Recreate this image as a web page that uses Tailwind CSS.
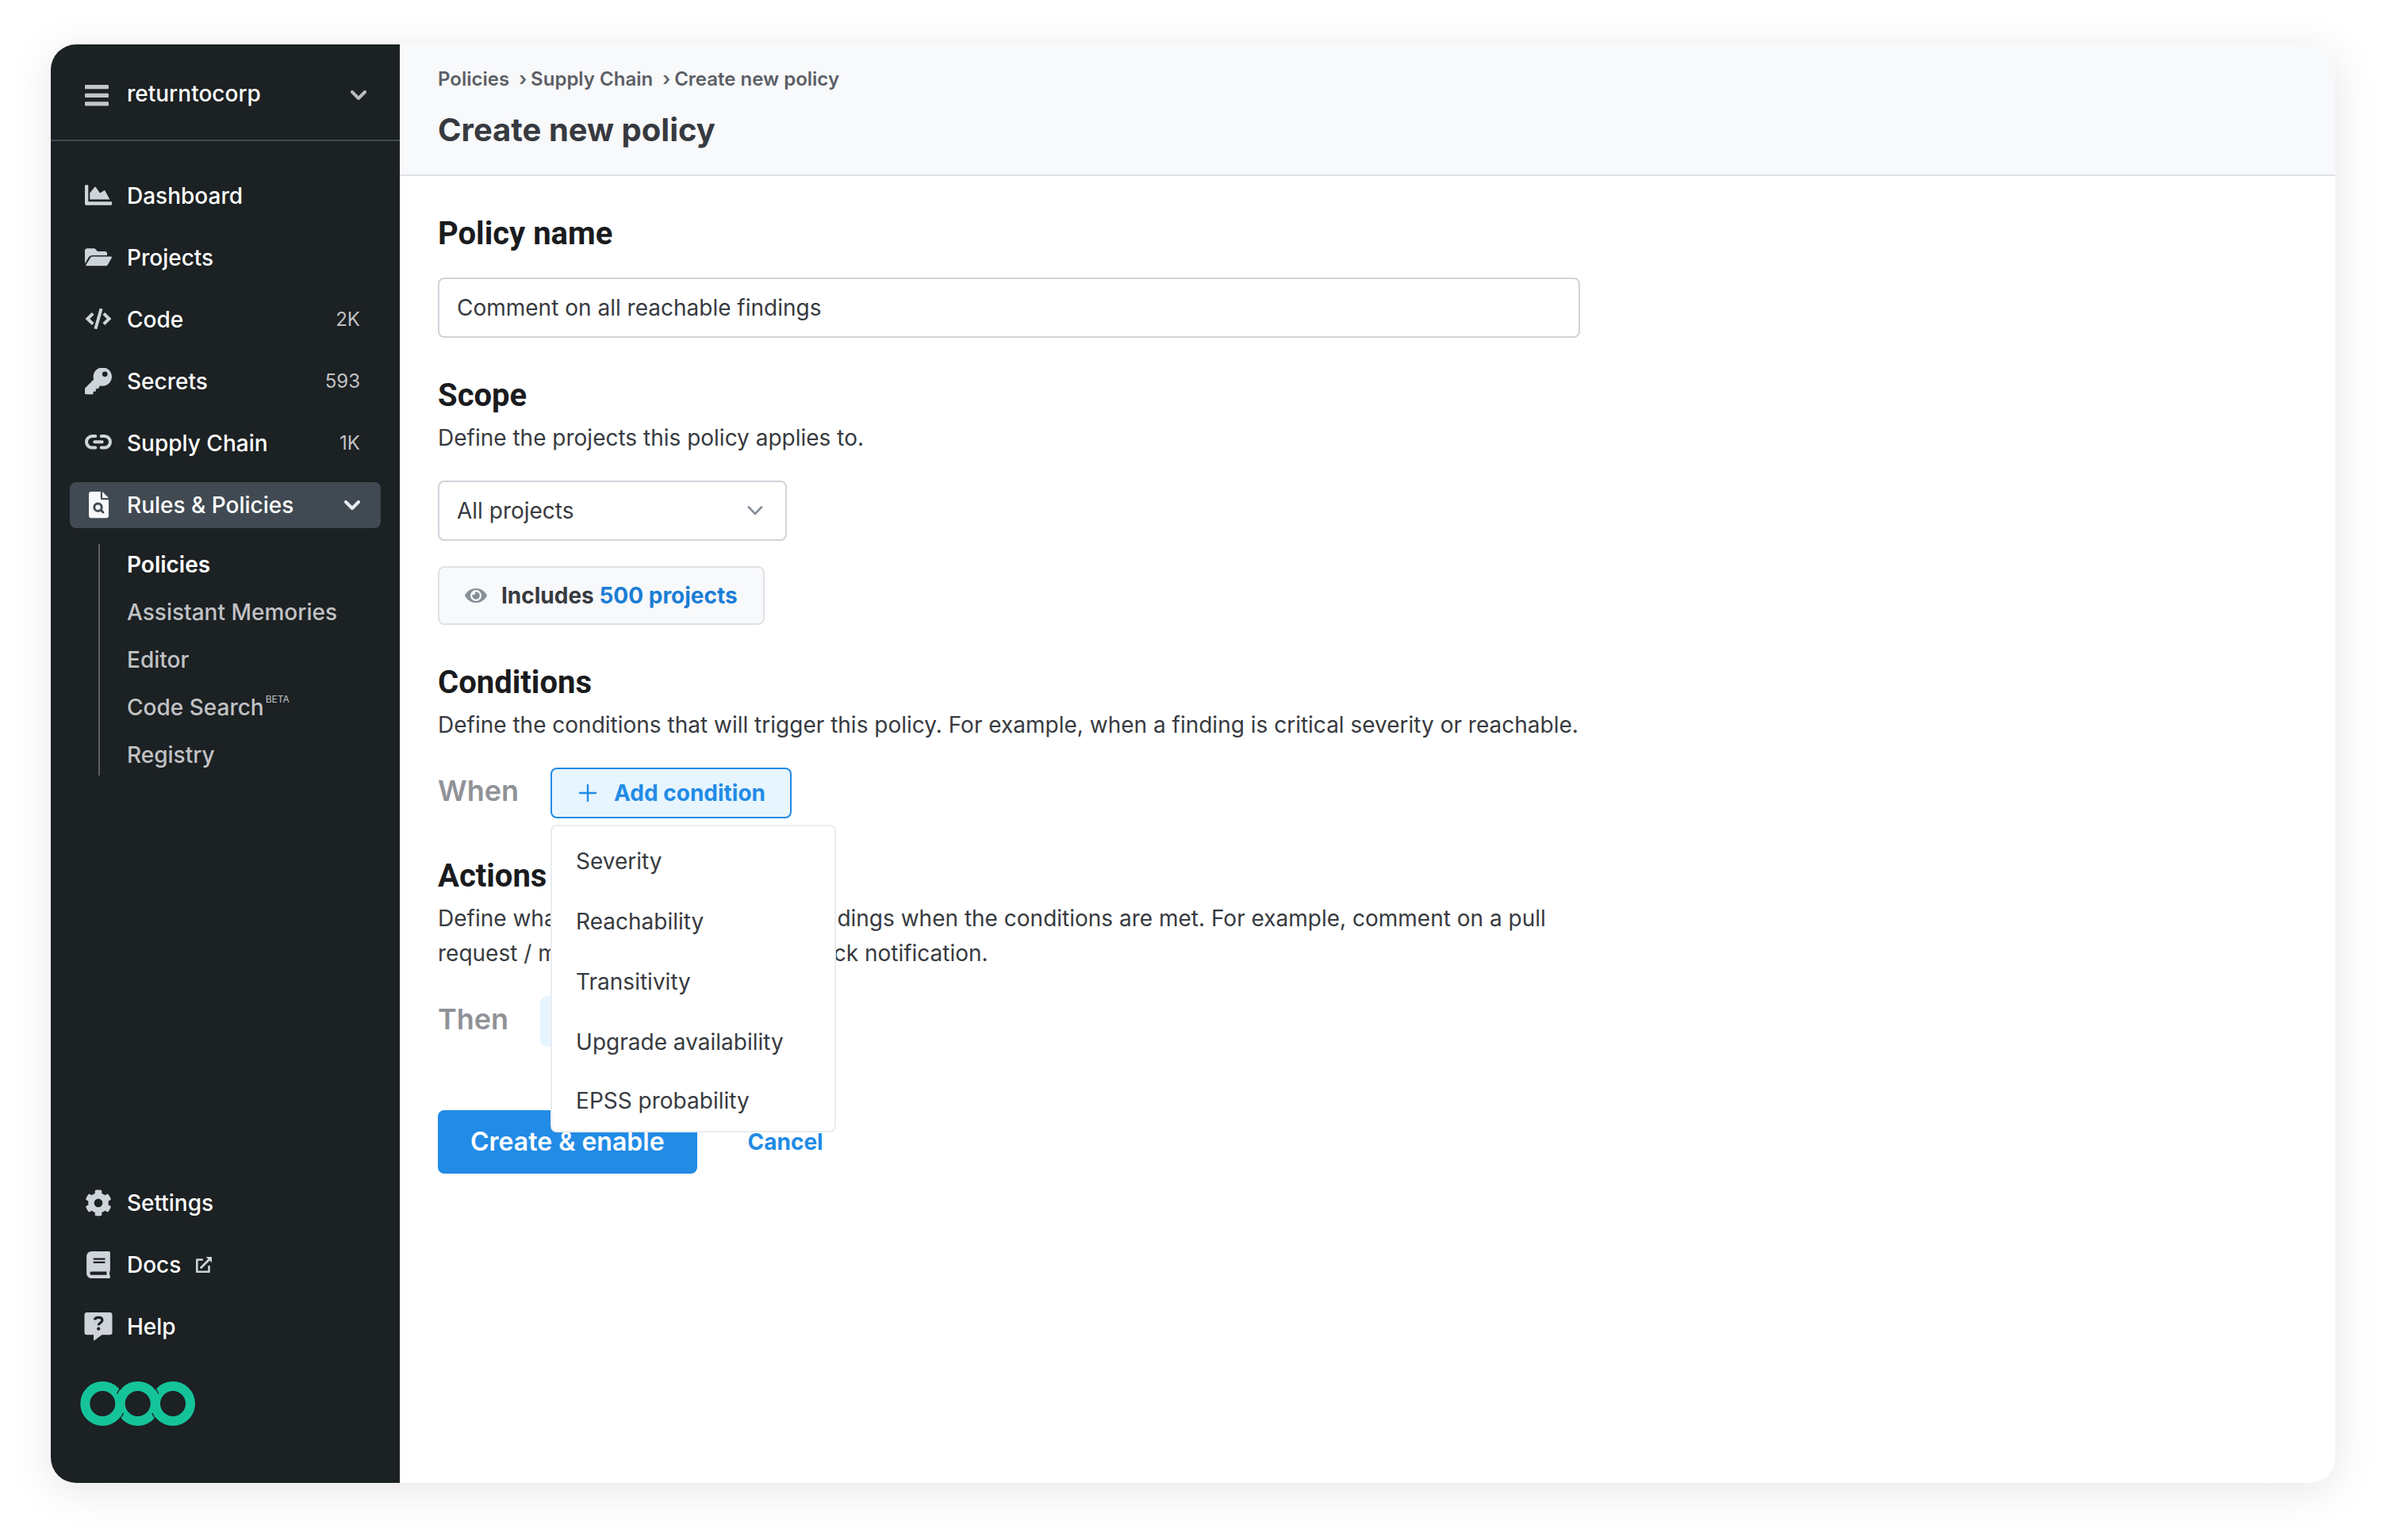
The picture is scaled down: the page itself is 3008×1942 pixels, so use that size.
<!DOCTYPE html>
<html lang="en">
<head>
    <meta charset="UTF-8">
    <meta name="viewport" content="width=device-width, initial-scale=1.0">
    <title>Create new policy</title>
    <script src="https://cdn.jsdelivr.net/npm/@tailwindcss/browser@4"></script>
</head>
<body class="bg-white font-['Inter','Liberation_Sans',sans-serif] text-[28px] leading-[44px] text-[#373a40]">
    <div class="flex min-h-screen px-16 pt-14 pb-[72px]">
        <div class="flex flex-1 overflow-hidden rounded-[32px] bg-white shadow-[0_8px_56px_rgba(0,0,0,0.1)]">

            <!-- Sidebar -->
            <aside class="flex w-[440px] shrink-0 flex-col bg-[#1c2123] font-medium text-white">
                <div class="flex h-[122px] items-center border-b-2 border-[#414a52] pt-1 pr-[42px] pl-[43px]">
                    <button type="button" aria-label="Menu" class="w-[53px] pt-1 text-[#c1c5c8]">
                        <svg class="h-[27px] w-[30px]" viewBox="0 0 30 27" fill="currentColor"><rect width="30" height="5.3" rx="1"/><rect y="10.7" width="30" height="5.3" rx="1"/><rect y="21.3" width="30" height="5.3" rx="1"/></svg>
                    </button>
                    <button type="button" class="flex flex-1 items-center justify-between">
                        returntocorp
                        <svg class="mt-1 h-3 w-5 text-[#b9bbbd]" viewBox="0 0 20 12" fill="none" stroke="currentColor" stroke-width="4" stroke-linecap="round" stroke-linejoin="round"><path d="M2 2l8 8 8-8"/></svg>
                    </button>
                </div>

                <nav class="flex flex-1 flex-col px-6 pt-10 pb-[42px]">
                    <ul class="flex flex-col gap-5">
                        <li>
                            <a href="#" class="flex h-[58px] items-center gap-[19px] pr-[26px] pl-[19px]">
                                <svg class="h-[34px] w-[34px] text-[#ced4da]" viewBox="0 0 34 34" fill="currentColor"><path d="M0 4.3a1 1 0 0 1 1-1h2.3a1 1 0 0 1 1 1v20H33a1 1 0 0 1 1 1v2.4a1 1 0 0 1-1 1H1.5A1.5 1.5 0 0 1 0 27.2z"/><path d="M6.3 21.5v-8.2l6-7.4a.9.9 0 0 1 1.4 0L19 13.4l5.2-3.2a.8.8 0 0 1 1.2.4l6 10.9z"/></svg>
                                Dashboard
                            </a>
                        </li>
                        <li>
                            <a href="#" class="flex h-[58px] items-center gap-[19px] pr-[26px] pl-[19px]">
                                <svg class="h-[34px] w-[34px] text-[#ced4da]" viewBox="0 0 34 34" fill="currentColor"><path d="M0 8.2A3 3 0 0 1 3 5.2h8.6a2 2 0 0 1 1.4.6l3 3.1h9.2a2.8 2.8 0 0 1 2.8 2.8v2.2H9.3a5.5 5.5 0 0 0-4.8 2.8L0 24.5z"/><path d="M7 17a3 3 0 0 1 2.5-1.4H33a1 1 0 0 1 .9 1.5l-5 8.7a3 3 0 0 1-2.6 1.5H2.3a1 1 0 0 1-.8-1.5z"/></svg>
                                Projects
                            </a>
                        </li>
                        <li>
                            <a href="#" class="flex h-[58px] items-center gap-[19px] pr-[26px] pl-[19px]">
                                <svg class="h-[34px] w-[34px] text-[#ced4da]" viewBox="0 0 34 34" fill="none" stroke="currentColor" stroke-width="4"><path d="M20.6 3.2l-7.2 25.6M10.2 9.4L3.4 16l6.800 6.600M23.800 9.400l6.800 6.600-6.800 6.600"/></svg>
                                <span class="flex-1">Code</span>
                                <span class="text-2xl font-normal text-[#c1c2c5]">2K</span>
                            </a>
                        </li>
                        <li>
                            <a href="#" class="flex h-[58px] items-center gap-[19px] pr-[26px] pl-[19px]">
                                <svg class="h-[34px] w-[34px] text-[#ced4da]" viewBox="0 10 512 512" fill="currentColor"><path d="M336 352c97.200 0 176-78.800 176-176S433.200 0 336 0S160 78.800 160 176c0 18.700 2.900 36.800 8.300 53.700L7 391c-4.500 4.500-7 10.600-7 17v80c0 13.300 10.700 24 24 24h124c6 0 10-4 10-10v-44h40c6 0 10-4 10-10v-44h32c6.400 0 12.500-2.500 17-7l33.300-53.300c16.900 5.400 27 8.300 45.700 8.300zM380 78a50 50 0 1 1 0 100 50 50 0 1 1 0-100z"/></svg>
                                <span class="flex-1">Secrets</span>
                                <span class="text-2xl font-normal text-[#c1c2c5]">593</span>
                            </a>
                        </li>
                        <li>
                            <a href="#" class="flex h-[58px] items-center gap-[19px] pr-[26px] pl-[19px]">
                                <svg class="h-[34px] w-[34px] text-[#ced4da]" viewBox="0 0 34 34" fill="none" stroke="currentColor" stroke-width="4" stroke-linecap="round"><path d="M13.300 8H9.300a7.300 7.300 0 0 0 0 14.600h4M20.700 8h4a7.300 7.300 0 0 1 0 14.600h-4M12.300 15.300h9.400"/></svg>
                                <span class="flex-1">Supply Chain</span>
                                <span class="text-2xl font-normal text-[#c1c2c5]">1K</span>
                            </a>
                        </li>
                        <li>
                            <button type="button" aria-expanded="true" class="flex h-[58px] w-full items-center gap-[19px] rounded-lg bg-[#414a52] pr-[26px] pl-[19px] text-left">
                                <svg class="h-[34px] w-[34px] text-[#f8f9fa]" viewBox="0 0 34 34" fill="currentColor"><path d="M8 0h11.800v8.500a1.700 1.700 0 0 0 1.700 1.700H30v20a3 3 0 0 1-3 3H8a3 3 0 0 1-3-3V3a3 3 0 0 1 3-3z"/><path d="M22 0v8h8z"/><g fill="none" stroke="#414a52" stroke-width="3" stroke-linecap="round"><circle cx="16.500" cy="19.700" r="4.700"/><path d="M20 23.300l3 2.700"/></g></svg>
                                <span class="flex-1">Rules &amp; Policies</span>
                                <svg class="h-3 w-5 text-[#e9ecef]" viewBox="0 0 20 12" fill="none" stroke="currentColor" stroke-width="4" stroke-linecap="round" stroke-linejoin="round"><path d="M2 2l8 8 8-8"/></svg>
                            </button>
                            <ul class="mt-5 ml-9 flex flex-col gap-2 border-l-2 border-[#5c5f66] pl-[34px] text-[#c1c2c5]">
                                <li><a href="#" aria-current="page" class="flex h-[52px] items-center font-semibold text-white">Policies</a></li>
                                <li><a href="#" class="flex h-[52px] items-center">Assistant Memories</a></li>
                                <li><a href="#" class="flex h-[52px] items-center">Editor</a></li>
                                <li><a href="#" class="flex h-[52px] items-center">Code Search<sup class="mb-2 ml-[2px] text-xs font-normal">BETA</sup></a></li>
                                <li><a href="#" class="flex h-[52px] items-center">Registry</a></li>
                            </ul>
                        </li>
                    </ul>

                    <ul class="mt-auto flex flex-col gap-5">
                        <li>
                            <a href="#" class="flex h-[58px] items-center gap-[19px] pl-[19px]">
                                <svg class="h-[34px] w-[34px] text-[#ced4da]" viewBox="0 0 512 512" fill="currentColor"><path d="M487.4 315.7l-42.600-24.600c4.300-23.200 4.300-47 0-70.200l42.600-24.600c4.900-2.800 7.100-8.600 5.500-14-11.100-35.600-30-67.800-54.700-94.600-3.800-4.100-10-5.100-14.800-2.300L380.800 110c-17.900-15.400-38.500-27.300-60.800-35.100V25.800c0-5.600-3.900-10.500-9.400-11.700-36.700-8.200-74.300-7.800-109.200 0-5.500 1.200-9.400 6.100-9.400 11.700V75c-22.200 7.900-42.800 19.800-60.800 35.100L88.700 85.500c-4.900-2.800-11-1.900-14.800 2.300-24.700 26.700-43.600 58.900-54.700 94.600-1.700 5.400.6 11.200 5.500 14L67.300 221c-4.300 23.200-4.300 47 0 70.200l-42.600 24.600c-4.900 2.800-7.100 8.600-5.500 14 11.100 35.600 30 67.800 54.700 94.600 3.800 4.100 10 5.100 14.800 2.300l42.600-24.600c17.900 15.400 38.500 27.300 60.800 35.100v49.200c0 5.600 3.900 10.500 9.400 11.700 36.700 8.200 74.300 7.800 109.200 0 5.500-1.200 9.400-6.100 9.400-11.700v-49.200c22.200-7.900 42.800-19.800 60.800-35.100l42.600 24.600c4.900 2.800 11 1.900 14.800-2.300 24.700-26.700 43.600-58.900 54.700-94.600 1.500-5.500-.7-11.300-5.600-14.100zM256 336c-44.100 0-80-35.900-80-80s35.900-80 80-80 80 35.900 80 80-35.900 80-80 80z"/></svg>
                                Settings
                            </a>
                        </li>
                        <li>
                            <a href="#" class="flex h-[58px] items-center gap-[19px] pl-[19px]">
                                <svg class="h-[34px] w-[34px] text-[#ced4da]" viewBox="-32 0 512 512" fill="currentColor"><path d="M448 360V24c0-13.300-10.700-24-24-24H96C43 0 0 43 0 96v320c0 53 43 96 96 96h328c13.300 0 24-10.700 24-24v-16c0-7.500-3.500-14.300-8.900-18.700-4.200-15.400-4.200-59.300 0-74.700 5.400-4.300 8.900-11.100 8.900-18.600zM128 134c0-3.300 2.700-6 6-6h212c3.300 0 6 2.700 6 6v20c0 3.300-2.700 6-6 6H134c-3.300 0-6-2.700-6-6v-20zm0 64c0-3.300 2.700-6 6-6h212c3.300 0 6 2.700 6 6v20c0 3.300-2.700 6-6 6H134c-3.300 0-6-2.700-6-6v-20zm253.400 250H96c-17.700 0-32-14.300-32-32 0-17.600 14.400-32 32-32h285.400c-1.900 17.100-1.900 46.900 0 64z"/></svg>
                                Docs
                                <svg class="h-5 w-5 text-[#ced4da]" viewBox="0 0 20 20"><path d="M9 3.500H1.300v15.200h15.200V11" fill="none" stroke="currentColor" stroke-width="2.600" stroke-linejoin="round"/><path d="M6.500 13.500L16 4" fill="none" stroke="currentColor" stroke-width="2.800" stroke-linecap="round"/><path d="M12.700 0H20v7.300z" fill="currentColor"/></svg>
                            </a>
                        </li>
                        <li>
                            <a href="#" class="flex h-[58px] items-center gap-[19px] pl-[19px]">
                                <svg class="h-9 w-[34px] overflow-visible text-[#ced4da]" viewBox="0 0 34 36"><path d="M2.500 0h29a3 3 0 0 1 3 3v22.300a3 3 0 0 1-3 3H21.500l-9.500 7a.6.6 0 0 1-1-.5v-6.500H2.500a3 3 0 0 1-3-3V3a3 3 0 0 1 3-3z" fill="currentColor"/><path d="M12.300 9.300c.6-2.300 2.500-3 5-3 2.700 0 4.600 1.200 4.600 3.600 0 3.300-4.600 3-4.600 6.300" fill="none" stroke="#1c2123" stroke-width="3.200"/><circle cx="17.200" cy="20.700" r="2.100" fill="#1c2123"/></svg>
                                Help
                            </a>
                        </li>
                    </ul>

                    <!-- Three linked rings -->
                    <svg class="mt-10 mb-[30px] ml-[13px] h-14 w-[146px]" viewBox="0 0 146 56" fill="none" stroke="#15c39a" stroke-width="12">
                        <circle cx="28.300" cy="28" r="22"/>
                        <circle cx="72.700" cy="28" r="22"/>
                        <circle cx="117" cy="28" r="22"/>
                        <g stroke="#1c2123" stroke-width="1.400">
                            <path d="M52.700 6.500A29 29 0 0 0 46.500 15.500M92.700 6.500A29 29 0 0 1 98.900 15.500M48.300 49.500A29 29 0 0 0 54.500 40M97 49.500A29 29 0 0 1 90.800 40"/>
                        </g>
                    </svg>
                </nav>
            </aside>

            <!-- Main -->
            <main class="min-w-0 flex-1">
                <header class="border-b-2 border-[#dee2e6] bg-[#f8f9fb] px-12 pt-[26px] pb-[30px]">
                    <nav aria-label="Breadcrumb" class="flex text-2xl leading-9 font-semibold text-[#5c5f66]">
                        <a href="#">Policies</a>
                        <span class="mr-[5px] ml-3">›</span>
                        <a href="#">Supply Chain</a>
                        <span class="mr-[5px] ml-3">›</span>
                        <span aria-current="page">Create new policy</span>
                    </nav>
                    <h1 class="mt-5 text-[40px] leading-[52px] font-bold">Create new policy</h1>
                </header>

                <form class="px-12 pt-[46px]">
                    <div class="max-w-[1440px]">
                        <section>
                            <label for="policy-name" class="block font-['Roboto',sans-serif] text-[40px] leading-[54px] font-bold text-[#1a1b1e]">Policy name</label>
                            <input id="policy-name" type="text" value="Comment on all reachable findings" class="mt-7 block h-[76px] w-full rounded-lg border-2 border-[#ced4da] px-[22px]">
                        </section>

                        <section class="mt-[46px]">
                            <h2 class="font-['Roboto',sans-serif] text-[40px] leading-[54px] font-bold text-[#1a1b1e]"><label for="scope">Scope</label></h2>
                            <p class="mt-1">Define the projects this policy applies to.</p>
                            <div class="relative mt-8 w-[440px]">
                                <select id="scope" class="block h-[76px] w-full appearance-none rounded-lg border-2 border-[#ced4da] bg-white px-[22px]">
                                    <option>All projects</option>
                                </select>
                                <svg class="pointer-events-none absolute top-8 right-[30px] h-3 w-5 text-[#868e96]" viewBox="0 0 20 12" fill="none" stroke="currentColor" stroke-width="2.600" stroke-linecap="round" stroke-linejoin="round"><path d="M2 1.500l8 8.500 8-8.500"/></svg>
                            </div>
                            <div class="mt-8 flex h-[74px] w-fit items-center rounded-lg border-2 border-[#dee2e6] bg-[#f8f9fb] px-8 font-bold">
                                <svg class="mr-[18px] h-[18px] w-7 text-[#868e96]" viewBox="0 0 28 18"><path d="M14 0c6 0 11 3.500 13.700 8.300a1.500 1.500 0 0 1 0 1.400C25 14.500 20 18 14 18S3 14.500.3 9.700a1.500 1.500 0 0 1 0-1.400C3 3.500 8 0 14 0z" fill="currentColor"/><circle cx="14" cy="9" r="7" fill="#f8f9fb"/><path d="M14 4.200a4.800 4.800 0 1 1-4.600 3.600 2.500 2.500 0 0 0 3.400-3.400 4.800 4.800 0 0 1 1.200-.2z" fill="currentColor"/></svg>
                                <span>Includes <a href="#" class="text-[#1c7ed6]">500 projects</a></span>
                            </div>
                        </section>

                        <section class="mt-[46px]">
                            <h2 class="font-['Roboto',sans-serif] text-[40px] leading-[54px] font-bold text-[#1a1b1e]">Conditions</h2>
                            <p class="mt-1">Define the conditions that will trigger this policy. For example, when a finding is critical severity or reachable.</p>
                            <div class="mt-8 flex h-16 items-center gap-10">
                                <span class="pb-[6px] text-4xl font-semibold text-[#909296]">When</span>
                                <div class="relative">
                                    <button type="button" aria-haspopup="menu" aria-expanded="true" class="flex h-16 items-center gap-[19px] rounded-lg border-2 border-[#228be6] bg-[#e7f5ff] px-[31px] font-bold text-[#228be6]">
                                        <svg class="h-7 w-7" viewBox="0 0 28 28" fill="none" stroke="currentColor" stroke-width="2.400" stroke-linecap="round"><path d="M14 4v20M4 14h20"/></svg>
                                        Add condition
                                    </button>
                                    <div role="menu" class="absolute top-[72px] left-0 z-10 w-[360px] rounded-lg border-2 border-[#e9ecef] bg-white pt-[6px] pb-[2px]">
                                        <button type="button" role="menuitem" class="block h-[76px] w-full px-[30px] text-left">Severity</button>
                                        <button type="button" role="menuitem" class="block h-[76px] w-full px-[30px] text-left">Reachability</button>
                                        <button type="button" role="menuitem" class="block h-[76px] w-full px-[30px] text-left">Transitivity</button>
                                        <button type="button" role="menuitem" class="block h-[76px] w-full px-[30px] text-left">Upgrade availability</button>
                                        <button type="button" role="menuitem" class="block h-[72px] w-full px-[30px] text-left">EPSS probability</button>
                                    </div>
                                </div>
                            </div>
                        </section>

                        <section class="mt-[46px]">
                            <h2 class="font-['Roboto',sans-serif] text-[40px] leading-[54px] font-bold text-[#1a1b1e]">Actions</h2>
                            <p class="mt-1">Define what action will be taken on findings when the conditions are met. For example, comment on a pull request / merge request or send a Slack notification.</p>
                            <div class="mt-8 flex h-16 items-center gap-10">
                                <span class="pb-[6px] text-4xl font-semibold text-[#909296]">Then</span>
                                <button type="button" aria-label="Add action" class="flex h-16 items-center rounded-lg bg-[#e7f5ff] px-10 text-[#228be6]">
                                    <svg class="h-7 w-7" viewBox="0 0 28 28" fill="none" stroke="currentColor" stroke-width="2.400" stroke-linecap="round"><path d="M14 4v20M4 14h20"/></svg>
                                </button>
                            </div>
                        </section>

                        <div class="mt-20 flex items-center gap-16">
                            <button type="submit" class="h-20 rounded-lg bg-[#228be6] px-[41px] text-[32px] font-semibold text-white">Create &amp; enable</button>
                            <button type="button" class="font-bold text-[#228be6]">Cancel</button>
                        </div>
                    </div>
                </form>
            </main>
        </div>
    </div>
</body>
</html>
